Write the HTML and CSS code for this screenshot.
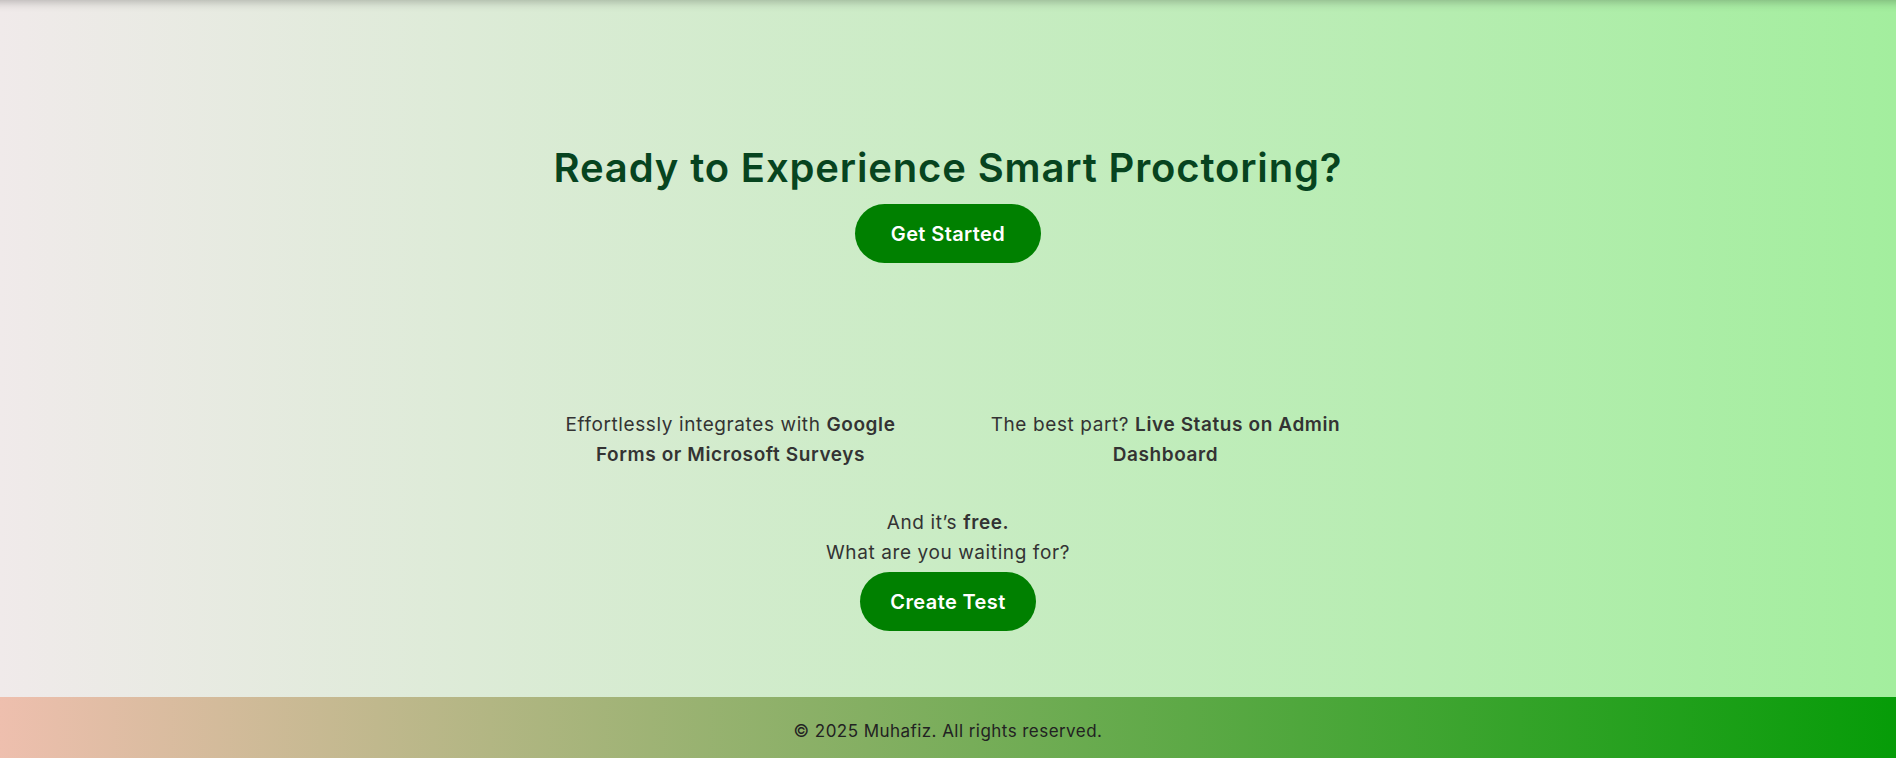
FILE: index.html
```html
<!DOCTYPE html>
<html lang="en">
<head>
<meta charset="utf-8">
<title>Muhafiz</title>
<link rel="stylesheet" href="styles.css">
</head>
<body>
<main class="page">
  <section class="hero">
    <h1 class="hero-title">Ready to Experience Smart Proctoring?</h1>
    <a class="btn btn-start" href="#">Get Started</a>
  </section>
  <section class="features">
    <p class="feature">Effortlessly integrates with <strong>Google</strong> <strong>Forms or Microsoft Surveys</strong></p>
    <p class="feature">The best part? <strong>Live Status on Admin</strong> <strong>Dashboard</strong></p>
  </section>
  <section class="cta">
    <p class="cta-text">And it’s <strong>free.</strong><br>What are you waiting for?</p>
    <a class="btn btn-create" href="#">Create Test</a>
  </section>
</main>
<footer class="footer">
  <p class="footer-text">© 2025 Muhafiz. All rights reserved.</p>
</footer>
</body>
</html>
```
FILE: styles.css
```css
* { box-sizing: border-box; }
html, body { margin: 0; padding: 0; }
body {
  font-family: "Inter", "Liberation Sans", sans-serif;
  color: #333;
}
.page {
  height: 697px;
  background: linear-gradient(to right, #f0eaea, #a3ee9e);
  box-shadow: inset 0 12px 10px -10px rgba(0,0,0,0.25);
  display: flex;
  flex-direction: column;
  align-items: center;
  text-align: center;
}
.hero {
  padding-top: 144px;
  display: flex;
  flex-direction: column;
  align-items: center;
}
.hero-title {
  margin: 0;
  font-size: 40px;
  line-height: 48px;
  font-weight: 600;
  color: #07441f;
  letter-spacing: 0.85px;
}
.btn {
  display: inline-flex;
  align-items: center;
  justify-content: center;
  height: 59px;
  border-radius: 30px;
  background: #008000;
  color: #fff;
  text-decoration: none;
  font-weight: 600;
  font-size: 20px;
  letter-spacing: 0.4px;
}
.btn-start { margin-top: 12px; padding: 0 36px; }
.btn-create { margin-top: 4px; padding: 0 30px; }
.features {
  margin-top: 147px;
  display: flex;
  gap: 65px;
}
.feature {
  margin: 0;
  width: 370px;
  font-size: 19px;
  line-height: 30px;
  letter-spacing: 0.6px;
}
.feature strong, .cta-text strong { font-weight: 600; }
.cta {
  margin-top: 38px;
  display: flex;
  flex-direction: column;
  align-items: center;
}
.cta-text {
  margin: 0;
  font-size: 19px;
  line-height: 30px;
  letter-spacing: 0.6px;
}
.footer {
  height: 61px;
  padding-top: 22px;
  background: linear-gradient(to right, #eebfae, #069c08);
  text-align: center;
}
.footer-text {
  margin: 0;
  font-size: 17px;
  line-height: 24px;
  color: #222;
  letter-spacing: 0.45px;
}
```
